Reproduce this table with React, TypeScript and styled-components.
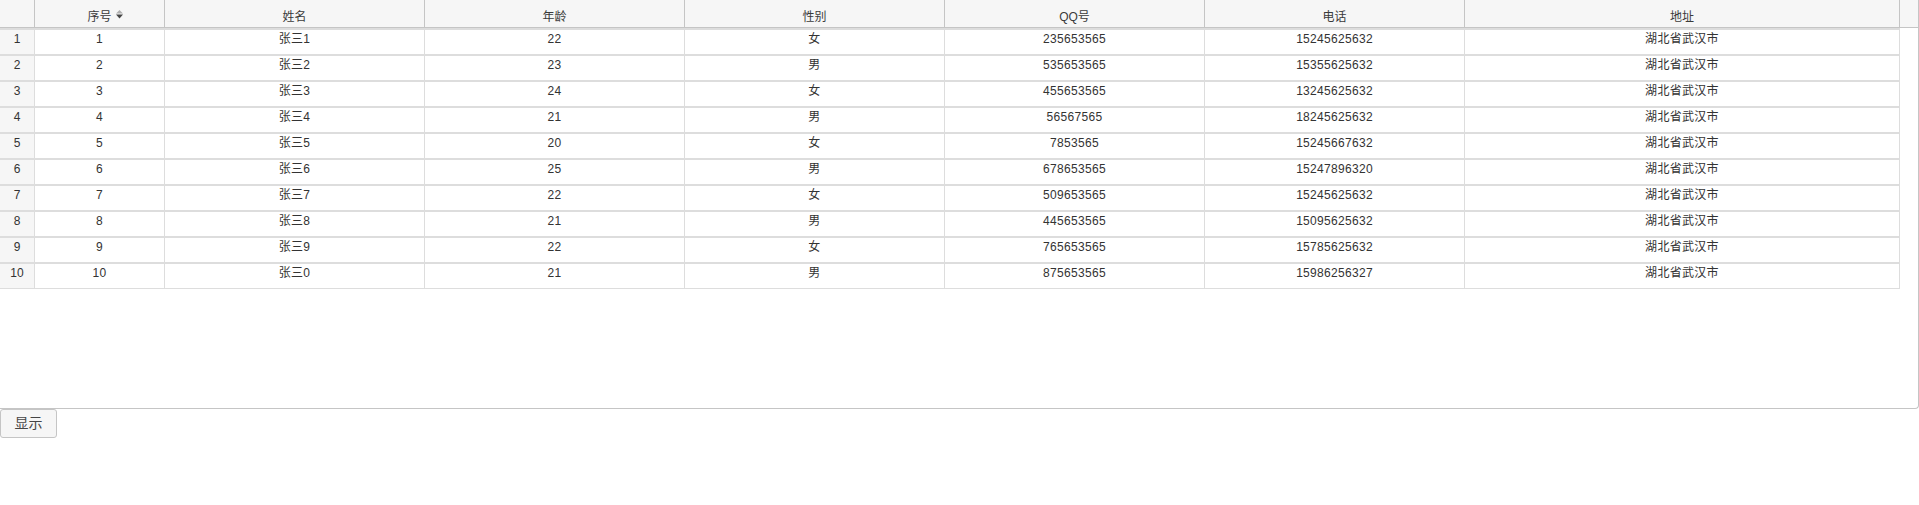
import React from "react";
import styled, { createGlobalStyle } from "styled-components";

const GlobalStyle = createGlobalStyle`
  html, body {
    margin: 0;
    padding: 0;
    background: #ffffff;
  }
  body {
    font-family: "Liberation Sans", Arial, "Noto Sans CJK SC", sans-serif;
    font-size: 12px;
    color: #333333;
  }
`;

const COLS = "35px 130px repeat(5, 260px) 435px";

const GridBox = styled.div`
  box-sizing: border-box;
  width: 1919px;
  height: 409px;
  border: 1px solid #c5c5c5;
  border-top: none;
  border-left: none;
  border-bottom-right-radius: 4px;
  background: #ffffff;
  display: flex;
  flex-direction: column;
`;

const HeaderRow = styled.div`
  display: grid;
  grid-template-columns: ${COLS} 1fr;
  height: 28px;
  box-sizing: border-box;
  background: #f6f6f6;
  border-bottom: 1px solid #c5c5c5;
`;

const HeaderCell = styled.div<{ $filler?: boolean }>`
  box-sizing: border-box;
  border-right: ${(p) => (p.$filler ? "none" : "1px solid #c5c5c5")};
  padding-top: 10px;
  line-height: 15px;
  font-size: 12px;
  color: #3a3a3a;
  text-align: center;
  white-space: nowrap;
`;

const HeaderLabel = styled.span`
  position: relative;
  display: inline-block;
`;

const SortIcon = styled.svg`
  position: absolute;
  left: calc(100% + 4px);
  top: 0px;
  width: 7px;
  height: 9px;
`;

const BodyTable = styled.div`
  width: 1900px;
  border-bottom: 1px solid #dddddd;
`;

const Row = styled.div`
  display: grid;
  grid-template-columns: ${COLS};
  border-top: 2px solid #dddddd;
`;

const Cell = styled.div<{ $rownum?: boolean }>`
  box-sizing: border-box;
  height: 24px;
  padding: 1px 2px 0;
  border-right: 1px solid #dddddd;
  background: ${(p) => (p.$rownum ? "#f6f6f6" : "#ffffff")};
  line-height: 16px;
  font-size: 12px;
  letter-spacing: ${(p) => (p.$rownum ? "0" : "0.3px")};
  color: #333333;
  text-align: center;
  white-space: nowrap;
  overflow: hidden;
`;

const ShowButton = styled.button`
  box-sizing: border-box;
  width: 57px;
  height: 29px;
  margin: 0;
  padding: 0;
  border: 1px solid #c5c5c5;
  border-radius: 3px;
  background: #f6f6f6;
  color: #454545;
  font-family: "Liberation Sans", Arial, "Noto Sans CJK SC", sans-serif;
  font-size: 14px;
  line-height: 27px;
  text-align: center;
  cursor: pointer;
`;

type Person = {
  id: number;
  name: string;
  age: number;
  sex: string;
  qq: string;
  phone: string;
  addr: string;
};

const data: Person[] = [
  { id: 1, name: "张三1", age: 22, sex: "女", qq: "235653565", phone: "15245625632", addr: "湖北省武汉市" },
  { id: 2, name: "张三2", age: 23, sex: "男", qq: "535653565", phone: "15355625632", addr: "湖北省武汉市" },
  { id: 3, name: "张三3", age: 24, sex: "女", qq: "455653565", phone: "13245625632", addr: "湖北省武汉市" },
  { id: 4, name: "张三4", age: 21, sex: "男", qq: "56567565", phone: "18245625632", addr: "湖北省武汉市" },
  { id: 5, name: "张三5", age: 20, sex: "女", qq: "7853565", phone: "15245667632", addr: "湖北省武汉市" },
  { id: 6, name: "张三6", age: 25, sex: "男", qq: "678653565", phone: "15247896320", addr: "湖北省武汉市" },
  { id: 7, name: "张三7", age: 22, sex: "女", qq: "509653565", phone: "15245625632", addr: "湖北省武汉市" },
  { id: 8, name: "张三8", age: 21, sex: "男", qq: "445653565", phone: "15095625632", addr: "湖北省武汉市" },
  { id: 9, name: "张三9", age: 22, sex: "女", qq: "765653565", phone: "15785625632", addr: "湖北省武汉市" },
  { id: 10, name: "张三0", age: 21, sex: "男", qq: "875653565", phone: "15986256327", addr: "湖北省武汉市" },
];

const headers = ["姓名", "年龄", "性别", "QQ号", "电话", "地址"];

export default function App() {
  return (
    <>
      <GlobalStyle />
      <GridBox>
        <HeaderRow>
          <HeaderCell />
          <HeaderCell>
            <HeaderLabel>
              序号
              <SortIcon viewBox="0 0 7 9">
                <polygon points="3.5,0 7,3.5 0,3.5" fill="#b0b0b0" />
                <polygon points="0,4.5 7,4.5 3.5,8.5" fill="#454545" />
              </SortIcon>
            </HeaderLabel>
          </HeaderCell>
          {headers.map((h) => (
            <HeaderCell key={h}>{h}</HeaderCell>
          ))}
          <HeaderCell $filler />
        </HeaderRow>
        <BodyTable>
          {data.map((r, i) => (
            <Row key={r.id}>
              <Cell $rownum>{i + 1}</Cell>
              <Cell>{r.id}</Cell>
              <Cell>{r.name}</Cell>
              <Cell>{r.age}</Cell>
              <Cell>{r.sex}</Cell>
              <Cell>{r.qq}</Cell>
              <Cell>{r.phone}</Cell>
              <Cell>{r.addr}</Cell>
            </Row>
          ))}
        </BodyTable>
      </GridBox>
      <ShowButton type="button">显示</ShowButton>
    </>
  );
}
